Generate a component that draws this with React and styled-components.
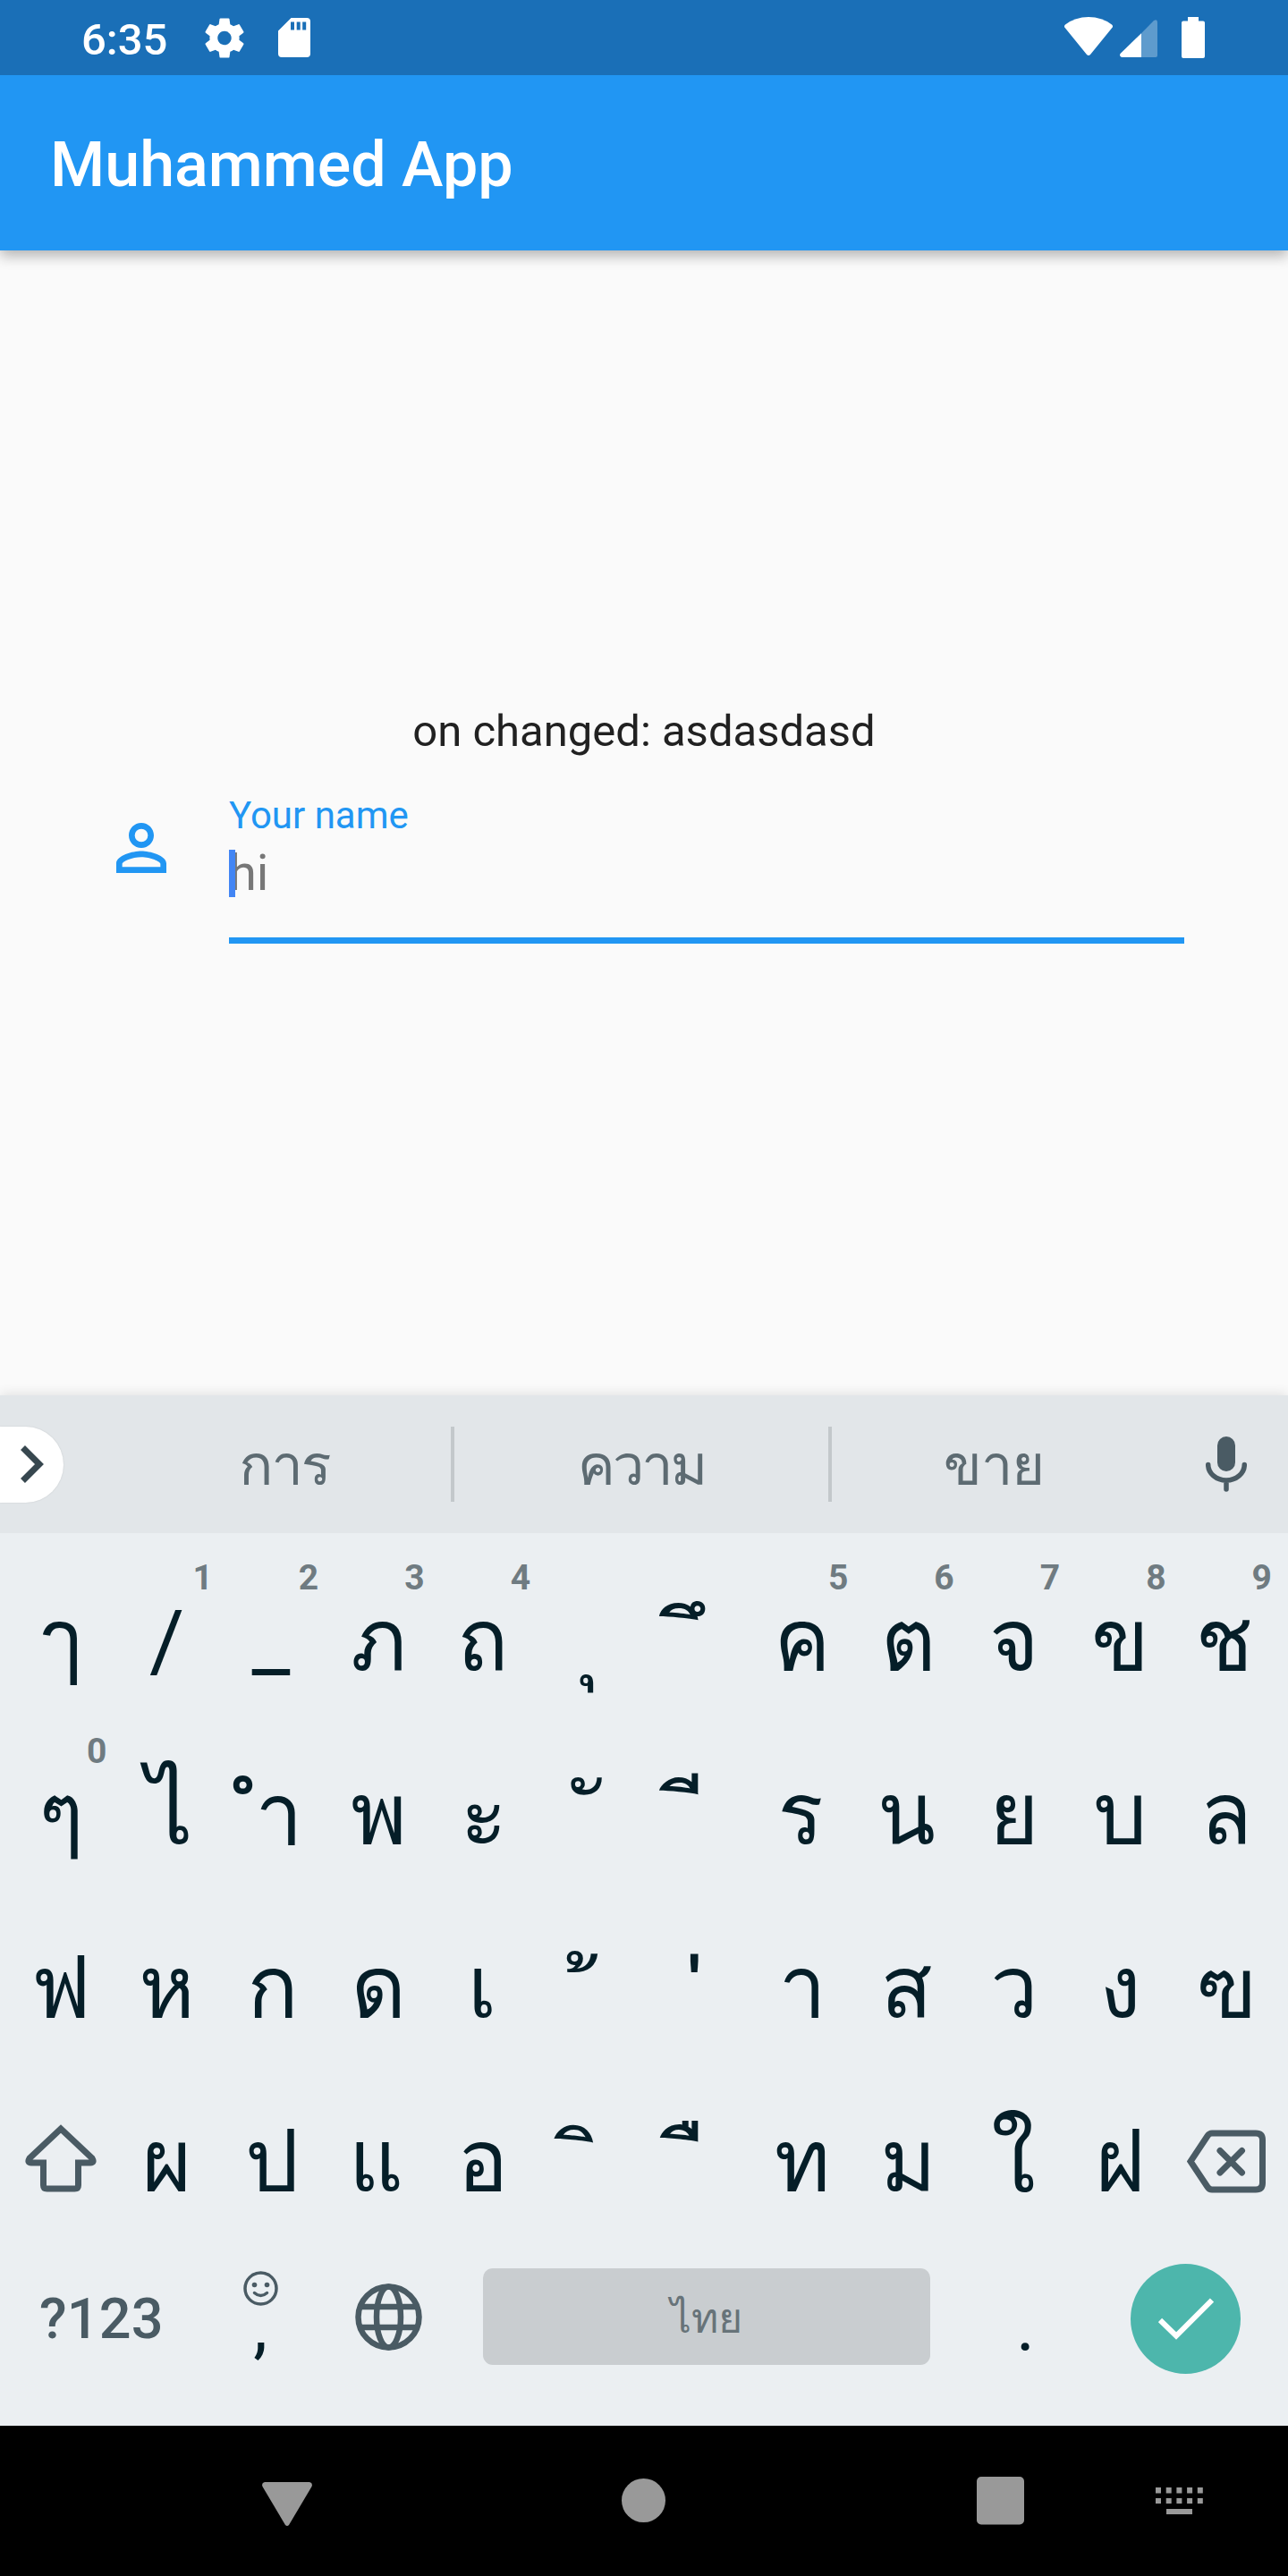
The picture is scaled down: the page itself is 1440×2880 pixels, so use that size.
import React from "react";
import styled, { createGlobalStyle } from "styled-components";

const GlobalStyle = createGlobalStyle`
  * { box-sizing: border-box; }
  body {
    margin: 0;
    background: #fafafa;
    font-family: Roboto, Loma, "Noto Sans Thai Looped", "Noto Sans", sans-serif;
  }
  svg { display: block; flex: none; }
`;

const Screen = styled.div`
  width: 1440px;
  height: 2880px;
  display: flex;
  flex-direction: column;
  overflow: hidden;
  background: #fafafa;
`;

/* ---------- Status and app bars ---------- */

const StatusBar = styled.header`
  height: 84px;
  padding: 0 93px 0 91px;
  display: flex;
  justify-content: space-between;
  background: #1a6fb7;
`;

const StatusGroup = styled.div`
  display: flex;
  align-items: flex-start;
`;

const Clock = styled.span`
  width: 133px;
  color: #fff;
  font-size: 49px;
  font-weight: 500;
  line-height: 89px;
`;

const StatusIcon = styled.svg`
  margin-top: ${(p) => p.$top}px;
  margin-left: ${(p) => p.$gap || 0}px;
`;

const AppBar = styled.div`
  height: 196px;
  padding-left: 56px;
  display: flex;
  align-items: center;
  color: #fff;
  background: #2196f3;
  box-shadow: 0 7px 14px rgba(0, 0, 0, 0.2), 0 2px 16px rgba(0, 0, 0, 0.12);
  clip-path: inset(0 0 -40px 0);
`;

const Title = styled.h1`
  margin: 0;
  padding-top: 4px;
  font-size: 70px;
  font-weight: 500;
  line-height: 82px;
`;

/* ---------- Form ---------- */

const Content = styled.main`
  flex: 1;
  padding: 504px 116px 0;
  display: flex;
  flex-direction: column;
`;

const Status = styled.p`
  margin: 0;
  color: #212121;
  font-size: 49px;
  line-height: 68px;
  text-align: center;
`;

const FieldRow = styled.div`
  padding-top: 31px;
  display: flex;
`;

const FieldIcon = styled.svg`
  margin: 23px 56px 0 0;
`;

const Field = styled.div`
  width: 1068px;
  height: 172px;
  display: flex;
  flex-direction: column;
  border-bottom: 7px solid #2196f3;
`;

const Label = styled.label`
  padding-top: 2px;
  color: #2196f3;
  font-size: 42px;
  line-height: 54px;
`;

const Entry = styled.div`
  height: 66px;
  margin-top: 4px;
  display: flex;
  align-items: center;
  color: #777;
  font-size: 56px;
  line-height: 66px;
`;

const Caret = styled.span`
  width: 7px;
  height: 53px;
  margin-right: -7px;
  position: relative;
  background: #4285f4;
`;

/* ---------- Keyboard ---------- */

const Keyboard = styled.section`
  height: 1152px;
  background: #ebeff2;
  box-shadow: 0 -2px 12px rgba(0, 0, 0, 0.1);
`;

const SuggestionBar = styled.div`
  height: 154px;
  display: flex;
  align-items: center;
  background: #e2e6e9;
`;

const Expand = styled.button`
  width: 71px;
  height: 85px;
  margin: 0 61px 0 0;
  padding: 0 0 0 23px;
  display: flex;
  align-items: center;
  border: 0;
  border-radius: 0 43px 43px 0;
  background: #fff;
  box-shadow: 0 0 2px rgba(0, 0, 0, 0.12);
`;

const Suggestion = styled.span`
  width: ${(p) => p.$width}px;
  padding-top: 4px;
  text-align: center;
  color: #5d6b72;
  font-size: 63px;
  line-height: 154px;
  letter-spacing: ${(p) => p.$spacing || 0}px;
`;

const Divider = styled.i`
  width: 4px;
  height: 84px;
  background: #c3c8cb;
`;

const Mic = styled.svg`
  margin: 0 0 0 56px;
`;

const KeyRow = styled.div`
  height: 194px;
  padding: 0 10px 0 9px;
  display: grid;
  grid-template-columns: repeat(12, 1fr);
`;

const Key = styled.div`
  position: relative;
  height: 194px;
  padding-top: 24px;
  display: flex;
  justify-content: center;
  color: #051e28;
  line-height: 194px;
  white-space: pre;
`;

const Glyph = styled.span`
  font-size: ${(p) => p.$size || 95}px;
  font-family: ${(p) => (p.$looped ? '"Noto Sans Thai Looped", Loma, sans-serif' : "inherit")};
  transform: translate(${(p) => p.$dx || 0}px, ${(p) => p.$dy || 0}px);
`;

const IconKey = styled.div`
  height: 194px;
  padding-top: ${(p) => p.$top}px;
  display: flex;
  justify-content: center;
`;

const Hint = styled.sup`
  position: absolute;
  top: 28px;
  right: 8px;
  color: #6f7b81;
  font-size: 39px;
  font-weight: 700;
  line-height: 44px;
`;

const BottomRow = styled.div`
  height: 194px;
  padding-left: 44px;
  display: flex;
`;

const SymbolsKey = styled.div`
  width: 190px;
  padding-top: 48px;
  color: #4a5b64;
  font-size: 63px;
  font-weight: 500;
  line-height: 110px;
  letter-spacing: 0.2px;
`;

const CommaKey = styled.div`
  width: 114px;
  padding-top: 49px;
  display: flex;
  flex-direction: column;
  align-items: center;
  color: #051e28;
  font-size: 80px;
  line-height: 46px;
`;

const GlobeKey = styled.div`
  width: 172px;
  padding-top: 63px;
  display: flex;
  justify-content: center;
`;

const SpaceBar = styled.div`
  width: 500px;
  height: 108px;
  margin: 46px 0 0 20px;
  border-radius: 11px;
  background: #c9cdd0;
  color: #677379;
  font-size: 46px;
  line-height: 112px;
  text-align: center;
`;

const PeriodKey = styled.div`
  width: 212px;
  padding: 56px 0 0 1px;
  text-align: center;
  color: #051e28;
  font-size: 80px;
  line-height: 110px;
`;

const Enter = styled.button`
  width: 123px;
  height: 123px;
  margin: 41px 0 0 12px;
  padding: 0;
  display: flex;
  align-items: center;
  justify-content: center;
  border: 0;
  border-radius: 50%;
  background: #4db6ac;
`;

/* ---------- Navigation ---------- */

const NavBar = styled.nav`
  height: 168px;
  padding-left: 293px;
  display: flex;
  background: #000;
`;

const NavIcon = styled.svg`
  margin: ${(p) => p.$top}px ${(p) => p.$gap || 0}px 0 0;
`;

const GEAR =
  "M19.43 12.98c.04-.32.07-.64.07-.98s-.03-.66-.07-.98l2.11-1.65c.19-.15.24-.42.12-.64l-2-3.46c-.12-.22-.39-.3-.61-.22l-2.49 1c-.52-.4-1.08-.73-1.69-.98l-.38-2.65C14.46 2.18 14.25 2 14 2h-4c-.25 0-.46.18-.49.42l-.38 2.65c-.61.25-1.17.59-1.69.98l-2.49-1c-.23-.09-.49 0-.61.22l-2 3.46c-.13.22-.07.49.12.64l2.11 1.65c-.04.32-.07.65-.07.98s.03.66.07.98l-2.11 1.65c-.19.15-.24.42-.12.64l2 3.46c.12.22.39.3.61.22l2.49-1c.52.4 1.08.73 1.69.98l.38 2.65c.03.24.24.42.49.42h4c.25 0 .46-.18.49-.42l.38-2.65c.61-.25 1.17-.59 1.69-.98l2.49 1c.23.09.49 0 .61-.22l2-3.46c.12-.22.07-.49-.12-.64l-2.11-1.65zM12 15.5c-1.93 0-3.5-1.57-3.5-3.5s1.57-3.5 3.5-3.5 3.5 1.57 3.5 3.5-1.57 3.5-3.5 3.5z";

const PERSON =
  "M12 5.9a2.1 2.1 0 1 1 0 4.2 2.1 2.1 0 0 1 0-4.2m0 9c2.97 0 6.1 1.46 6.1 2.1v1.1H5.9V17c0-.64 3.13-2.1 6.1-2.1M12 4C9.79 4 8 5.79 8 8s1.79 4 4 4 4-1.79 4-4-1.79-4-4-4zm0 9c-2.67 0-8 1.34-8 4v3h16v-3c0-2.66-5.33-4-8-4z";

/* Combining marks sit on a no-break space so that no placeholder circle is drawn. */
const NB = "\u00a0";

const key = (glyph, hint) => ({ glyph, hint });
const tuned = (glyph, dx, dy, more) => ({ glyph, dx, dy, ...more });

const ROWS = [
  [
    key("ๅ"), key("/", "1"), tuned("_", -2, -1, { hint: "2" }), key("ภ", "3"),
    tuned("ถ", -2, 0, { hint: "4" }), tuned(NB + "\u0e38", -3, 1),
    tuned(NB + "\u0e36", -3, 1), key("ค", "5"), key("ต", "6"), key("จ", "7"),
    key("ข", "8"), tuned("ช", -2, 0, { hint: "9" }),
  ],
  [
    key("ๆ", "0"), tuned("ไ", 3, -3, { size: 104 }), tuned("\u0e33", 7, 1), key("พ"),
    tuned("ะ", -1, 2, { size: 98 }), tuned(NB + "\u0e31", 0, 2),
    tuned(NB + "\u0e35", -3, 2), tuned("ร", -2, 0), tuned("น", -2, 0), key("ย"),
    key("บ"), key("ล"),
  ],
  [
    key("ฟ"), key("ห"), key("ก"), key("ด"), tuned("เ", -3, 0),
    tuned(NB + "\u0e49", -1, 0, { looped: true }),
    tuned(NB + "\u0e48", -2, 0, { looped: true }), key("า"), tuned("ส", -2, 0),
    key("ว"), key("ง"), key("ฃ"),
  ],
];

const LAST_ROW = [
  key("ผ"), tuned("ป", -1, 0), tuned("แ", -3, 0), tuned("อ", -2, 0),
  tuned(NB + "\u0e34", -2, 3), tuned(NB + "\u0e37", -3, 2),
  key("ท"), key("ม"), tuned("ใ", -1, -2, { size: 102 }), key("ฝ"),
];

function Keys({ keys }) {
  return keys.map(({ glyph, hint, dx, dy, size, looped }) => (
    <Key key={glyph}>
      <Glyph $dx={dx} $dy={dy} $size={size} $looped={looped}>
        {glyph}
      </Glyph>
      {hint && <Hint>{hint}</Hint>}
    </Key>
  ));
}

function TopBars() {
  return (
    <>
      <StatusBar>
        <StatusGroup>
          <Clock>6:35</Clock>
          <StatusIcon $top={15.5} width="54" height="53" viewBox="0 0 24 24" fill="#fff">
            <path d={GEAR} />
          </StatusIcon>
          <StatusIcon $top={20} $gap={33} width="36" height="44" viewBox="0 0 36 44">
            <path
              fill="#fff"
              fillRule="evenodd"
              d="M14.5 0H32q4 0 4 4v36q0 4-4 4H4q-4 0-4-4V14.5zM14 4.500v9h4v-9zM20.700 4.500v9h4v-9zM27.200 4.500v9h4v-9z"
            />
          </StatusIcon>
        </StatusGroup>
        <StatusGroup>
          <StatusIcon $top={19} width="54" height="44" viewBox="0 0 54 44">
            <path
              fill="#fff"
              d="M1 8.500Q12 0 27 0t26 8.500q1.800 1.600.4 3.600L29 42q-2 2-4 0L.600 12.100q-1.400-2 .4-3.600z"
            />
          </StatusIcon>
          <StatusIcon $top={22} $gap={8} width="42" height="42" viewBox="0 0 42 42">
            <path fill="#5e9bcd" d="M24 15.200 38 1q4-2 4 2v37q0 2-2 2H24z" />
            <path fill="#fff" d="M24 15.200V42H2q-3-1-1.500-4z" />
          </StatusIcon>
          <StatusIcon $top={19} $gap={27} width="26" height="46" viewBox="0 0 26 46">
            <path fill="#fff" d="M7 0h12v4.500h5q2 0 2 2V44q0 2-2 2H2q-2 0-2-2V6.500q0-2 2-2h5z" />
          </StatusIcon>
        </StatusGroup>
      </StatusBar>
      <AppBar>
        <Title>Muhammed App</Title>
      </AppBar>
    </>
  );
}

export default function App() {
  return (
    <Screen>
      <GlobalStyle />
      <TopBars />
      <Content>
        <Status>on changed: asdasdasd</Status>
        <FieldRow>
          <FieldIcon width="84" height="84" viewBox="0 0 24 24" fill="#2196f3">
            <path d={PERSON} />
          </FieldIcon>
          <Field>
            <Label>Your name</Label>
            <Entry>
              <Caret />
              hi
            </Entry>
          </Field>
        </FieldRow>
      </Content>
      <Keyboard>
        <SuggestionBar>
          <Expand aria-label="expand">
            <svg width="26" height="42" viewBox="0 0 26 42" fill="none" stroke="#37474f" strokeWidth="7">
              <path d="M2.500 2.500 21 21 2.500 39.500" />
            </svg>
          </Expand>
          <Suggestion $width={372} $spacing={-2}>การ</Suggestion>
          <Divider />
          <Suggestion $width={418} $spacing={-3}>ความ</Suggestion>
          <Divider />
          <Suggestion $width={362} $spacing={-1}>ขาย</Suggestion>
          <Mic width="46" height="62" viewBox="0 0 46 62" fill="none" stroke="#4a5b64">
            <rect x="13" y="0" width="20" height="39" rx="10" fill="#4a5b64" stroke="none" />
            <path d="M2.700 31.500a20.300 17.500 0 0 0 40.600 0M23 49v10" strokeWidth="5.500" strokeLinecap="round" />
          </Mic>
        </SuggestionBar>
        {ROWS.map((keys, i) => (
          <KeyRow key={i}>
            <Keys keys={keys} />
          </KeyRow>
        ))}
        <KeyRow>
          <IconKey $top={79}>
            <svg width="80" height="76" viewBox="0 0 80 76" fill="none" stroke="#4a5b64" strokeWidth="7" strokeLinejoin="miter">
              <path d="M40 5 5 38q-3 5 2 5h13.500v25q0 4 4 4h31q4 0 4-4V43H73q5 0 2-5z" />
            </svg>
          </IconKey>
          <Keys keys={LAST_ROW} />
          <IconKey $top={85}>
            <svg width="88" height="71" viewBox="0 0 88 71" fill="none" stroke="#4a5b64" strokeWidth="7">
              <path d="M28 4h49q7.500 0 7.500 7.500v48q0 7.500-7.500 7.500H28q-3 0-5-3L4 35.500 23 7q2-3 5-3z" />
              <path d="m37 23.500 24.500 24.500M61.500 23.500 37 48" strokeLinecap="round" />
            </svg>
          </IconKey>
        </KeyRow>
        <BottomRow>
          <SymbolsKey>?123</SymbolsKey>
          <CommaKey>
            <svg width="39" height="39" viewBox="0 0 39 39" fill="none" stroke="#4a5b64" strokeWidth="3.500">
              <circle cx="19.500" cy="19.500" r="17.500" />
              <path d="M12.500 24.500q7 6 14 0" strokeLinecap="round" />
              <circle cx="12.500" cy="15.500" r="2.800" fill="#4a5b64" stroke="none" />
              <circle cx="26.500" cy="15.500" r="2.800" fill="#4a5b64" stroke="none" />
            </svg>
            ,
          </CommaKey>
          <GlobeKey>
            <svg width="75" height="75" viewBox="0 0 75 75" fill="none" stroke="#4a5b64" strokeWidth="6.500">
              <circle cx="37.500" cy="37.500" r="34" />
              <ellipse cx="37.500" cy="37.500" rx="13.500" ry="34" />
              <path d="M6 26h63M6 49h63" />
            </svg>
          </GlobeKey>
          <SpaceBar>ไทย</SpaceBar>
          <PeriodKey>.</PeriodKey>
          <Enter aria-label="done">
            <svg width="62" height="47" viewBox="0 0 62 47" fill="none" stroke="#fff" strokeWidth="6">
              <path d="M2 25 20 42.500 60 2.500" />
            </svg>
          </Enter>
        </BottomRow>
      </Keyboard>
      <NavBar>
        <NavIcon $top={63} $gap={346} width="56" height="50" viewBox="0 0 56 50" fill="#999">
          <path d="M3 0h50q4 1 2.500 5L30 48q-2 2-4 0L.500 5Q-1 1 3 0z" />
        </NavIcon>
        <NavIcon $top={59} $gap={348} width="49" height="49" viewBox="0 0 49 49" fill="#999">
          <circle cx="24.500" cy="24.500" r="24.500" />
        </NavIcon>
        <NavIcon $top={57} $gap={147} width="53" height="54" viewBox="0 0 53 54" fill="#999">
          <rect width="53" height="53.500" rx="5" />
        </NavIcon>
        <NavIcon $top={69} width="54" height="31" viewBox="0 0 54 31" fill="#999">
          {[0, 11.7, 23.4, 35.1, 46.8].map((x) => (
            <React.Fragment key={x}>
              <rect x={x} y="0" width="6" height="6.500" />
              <rect x={x} y="12" width="6" height="6" />
            </React.Fragment>
          ))}
          <rect x="12" y="24" width="29" height="6" />
        </NavIcon>
      </NavBar>
    </Screen>
  );
}
